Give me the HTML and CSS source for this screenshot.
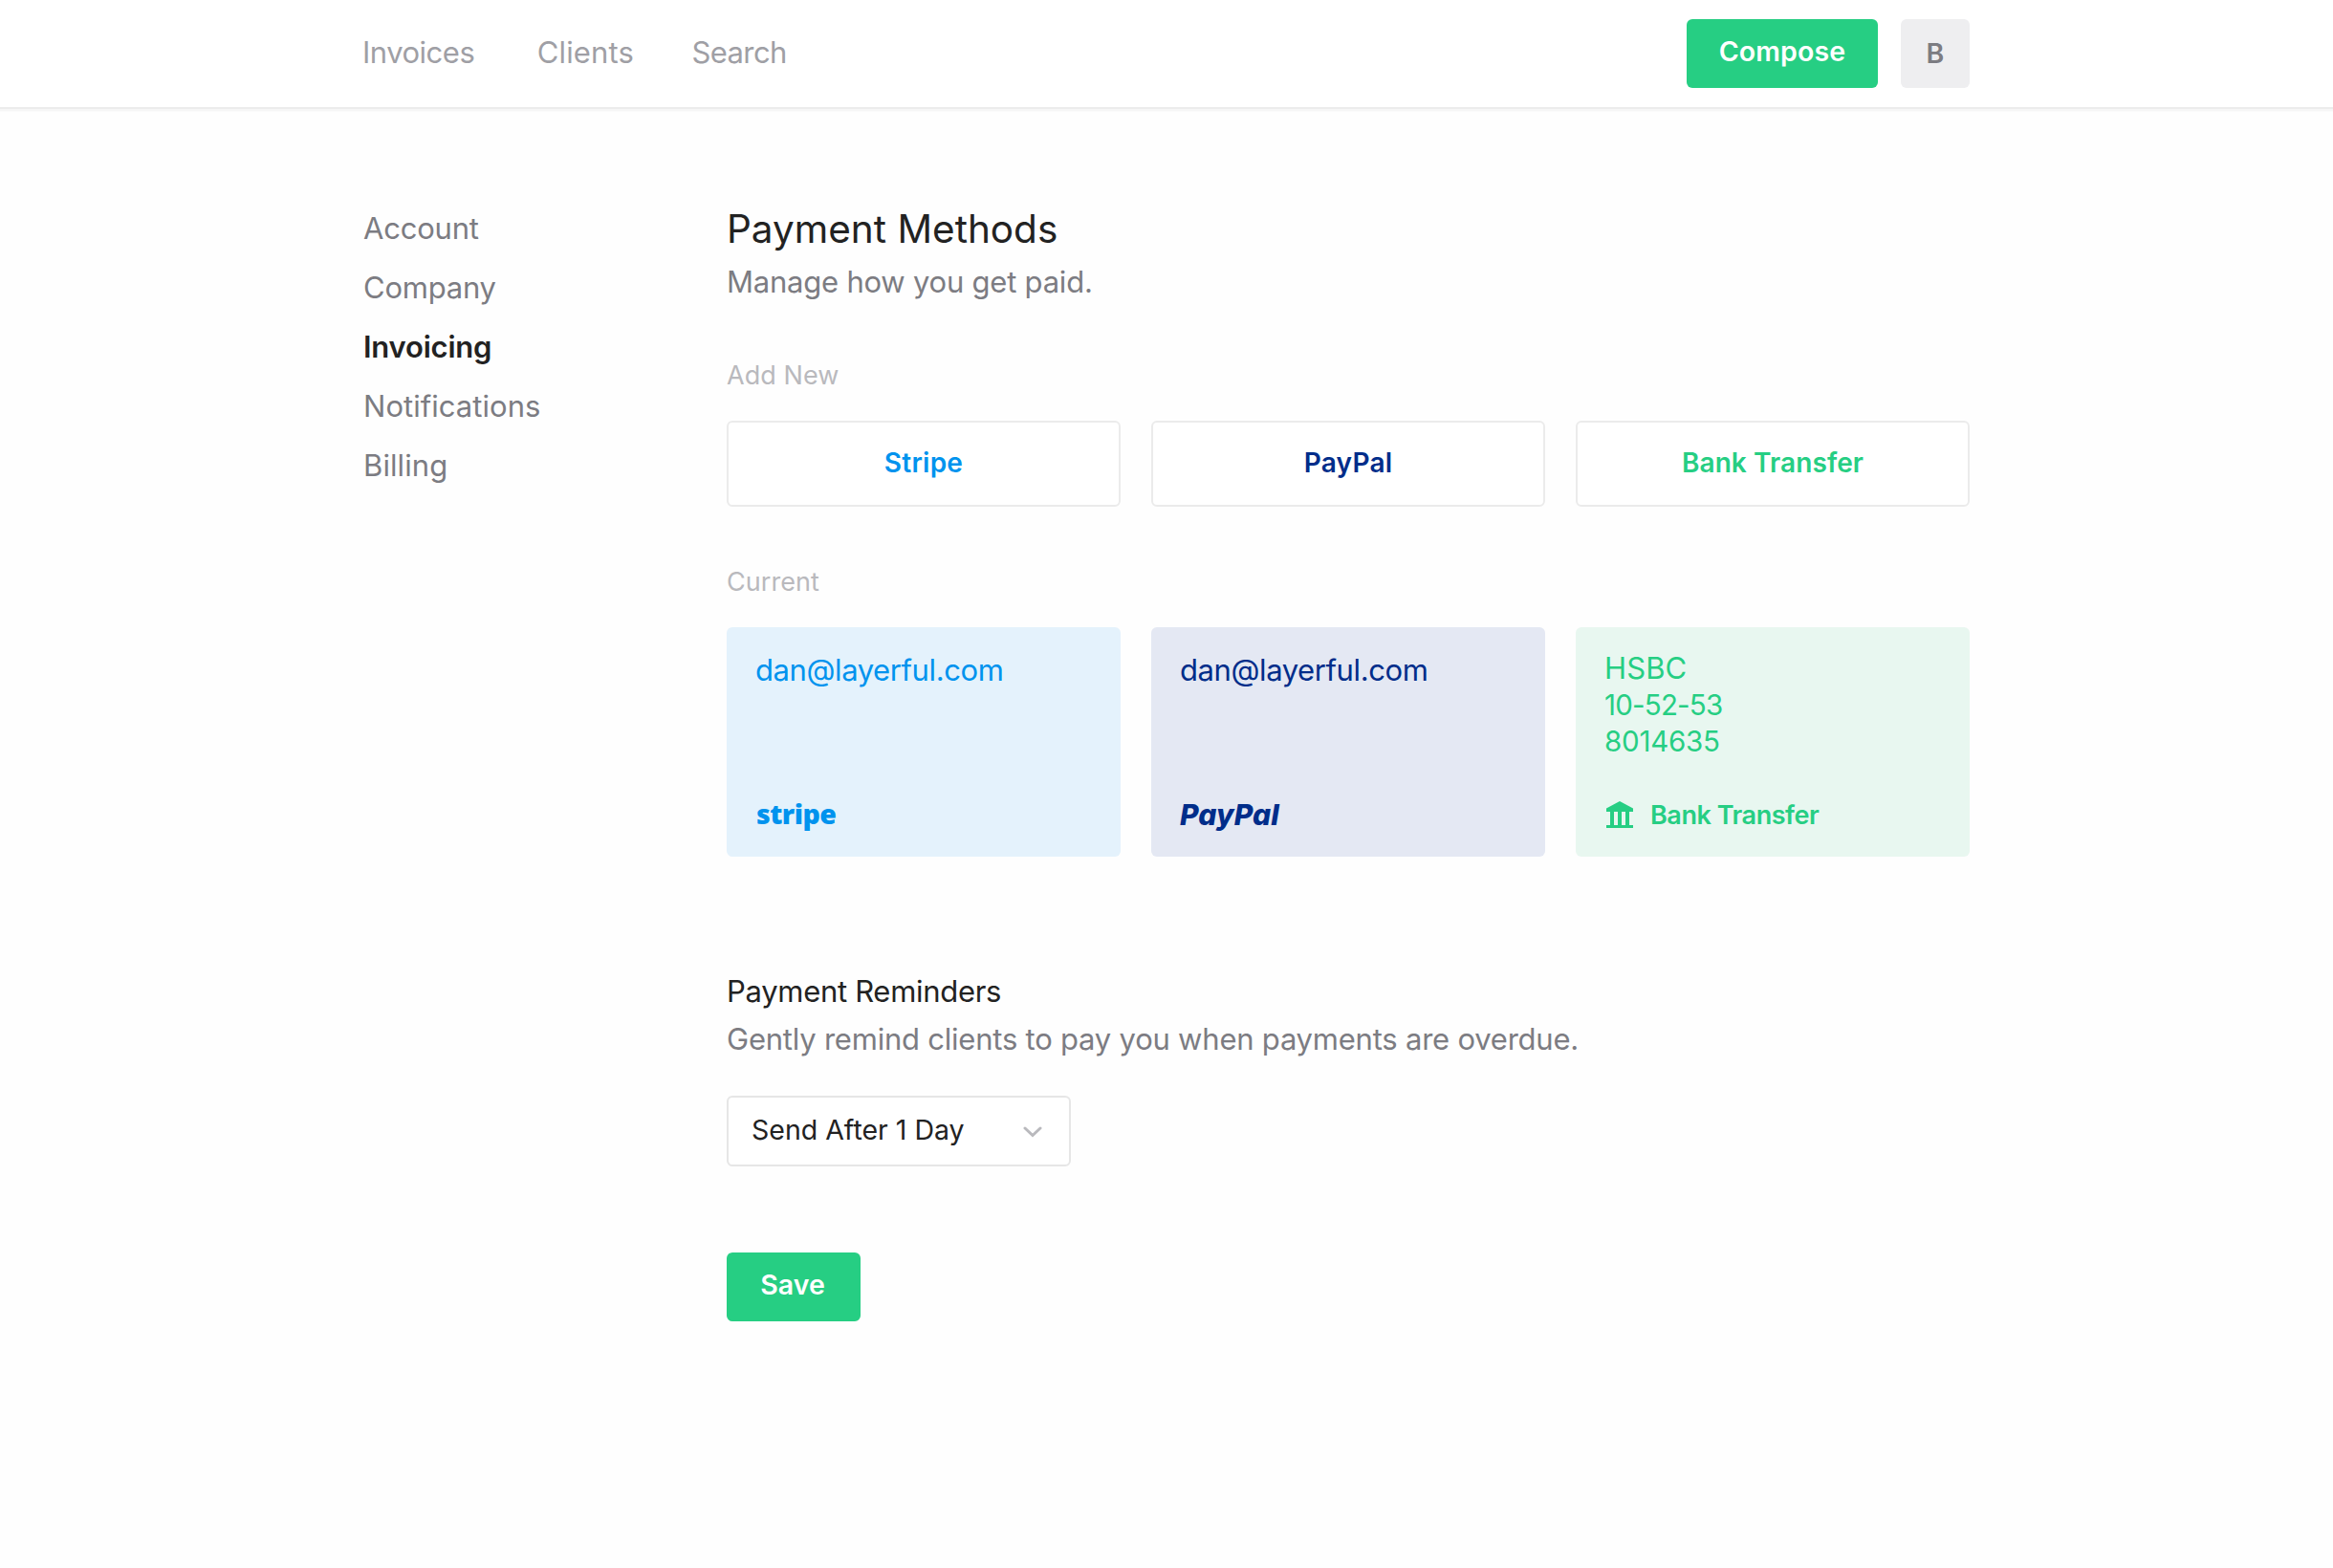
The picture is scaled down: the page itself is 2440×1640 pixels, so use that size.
FILE: index.html
```html
<!DOCTYPE html>
<html lang="en">
<head>
<meta charset="utf-8">
<title>Payment Methods</title>
<link rel="stylesheet" href="styles.css">
</head>
<body>
<header class="topbar">
  <div class="container topbar-inner">
    <nav class="nav">
      <a class="nav-link nav-invoices">Invoices</a>
      <a class="nav-link nav-clients">Clients</a>
      <a class="nav-link nav-search">Search</a>
    </nav>
    <div class="actions">
      <button class="btn btn-compose">Compose</button>
      <button class="avatar">B</button>
    </div>
  </div>
</header>

<div class="container page">
  <aside class="sidebar">
    <a class="side-link">Account</a>
    <a class="side-link">Company</a>
    <a class="side-link side-link-active">Invoicing</a>
    <a class="side-link side-notifications">Notifications</a>
    <a class="side-link side-billing">Billing</a>
  </aside>

  <main class="content">
    <h1 class="title">Payment Methods</h1>
    <p class="subtitle">Manage how you get paid.</p>

    <h3 class="label label-add">Add New</h3>
    <div class="grid">
      <button class="method method-stripe">Stripe</button>
      <button class="method method-paypal">PayPal</button>
      <button class="method method-bank">Bank Transfer</button>
    </div>

    <h3 class="label label-current">Current</h3>
    <div class="grid">
      <div class="card card-stripe">
        <div class="email">dan@layerful.com</div>
        <div class="brand brand-stripe">stripe</div>
      </div>
      <div class="card card-paypal">
        <div class="email">dan@layerful.com</div>
        <div class="brand brand-paypal">PayPal</div>
      </div>
      <div class="card card-bank">
        <div class="bank-details">
          <div class="bank-name">HSBC</div>
          <div class="sort-code">10-52-53</div>
          <div class="account-number">8014635</div>
        </div>
        <div class="brand brand-bank">
          <svg class="bank-icon" viewBox="0 0 28 28" fill="currentColor"><path d="M14 0 28 7.6V11H0V7.6ZM4 11h4v14H4ZM12 11h4v14h-4ZM20 11h4v14h-4ZM0 25h28v3H0Z"/></svg>
          <span>Bank Transfer</span>
        </div>
      </div>
    </div>

    <h2 class="section-title">Payment Reminders</h2>
    <p class="subtitle">Gently remind clients to pay you when payments are overdue.</p>
    <div class="select">
      <span>Send After 1 Day</span>
      <svg class="chevron" viewBox="0 0 20 12" fill="none" stroke="currentColor" stroke-width="3" stroke-linecap="round"><path d="M2 2l8 7.5L18 2"/></svg>
    </div>
    <button class="btn btn-save">Save</button>
  </main>
</div>
</body>
</html>
```
FILE: styles.css
```css
* { box-sizing: border-box; }

body {
  margin: 0;
  background: #fefefe;
  color: #222;
  font-family: Inter, "Liberation Sans", sans-serif;
  font-size: 31px;
  letter-spacing: -0.22px;
}

h1, h2, h3, p { margin: 0; font-weight: 400; }

button {
  border: 0;
  padding: 0;
  font: inherit;
  font-weight: 600;
}

.container { width: 1680px; margin: 0 auto; }

/* Top bar */
.topbar {
  height: 112px;
  background: #fff;
  box-shadow: 0 2px 0 #ececec, 0 4px 0 #f6f6f6, 0 5px 0 #fbfbfb;
}
.topbar-inner {
  height: 100%;
  display: flex;
  align-items: center;
  justify-content: space-between;
}
.nav { display: flex; margin-left: -1px; padding-bottom: 3px; color: #9f9fa5; }
.nav-invoices { letter-spacing: -0.5px; }
.nav-clients { margin-left: 65.5px; letter-spacing: 0.14px; }
.nav-search { margin-left: 60.5px; letter-spacing: -0.6px; }
.actions { display: flex; gap: 24px; }

.btn {
  display: flex;
  justify-content: center;
  align-items: center;
  height: 72px;
  padding-bottom: 5px;
  border-radius: 6px;
  background: #26ce83;
  color: #fff;
  font-size: 28.5px;
}
.btn-compose { width: 200px; letter-spacing: 0.12px; }
.btn-save { width: 140px; margin: 90px 0 0 -0.5px; padding-right: 1px; }
.avatar {
  width: 72px;
  height: 72px;
  padding-bottom: 2px;
  border-radius: 6px;
  background: #eeeef0;
  color: #7c7c82;
  font-size: 28.5px;
}

/* Page columns */
.page {
  display: grid;
  grid-template-columns: 380px 1300px;
  padding-top: 96px;
}
.sidebar { display: flex; flex-direction: column; color: #7c7c82; }
.side-link { line-height: 62px; }
.side-link-active { color: #222; font-weight: 600; }
.side-notifications { letter-spacing: 0.04px; }
.side-billing { letter-spacing: 0.1px; }

.title { padding-top: 1px; font-size: 40.5px; line-height: 61px; letter-spacing: 0; }
.subtitle { line-height: 50px; color: #7c7c82; }
.section-title { margin-top: 116px; font-size: 31px; line-height: 50px; letter-spacing: -0.3px; }
.label { padding-top: 1px; font-size: 27px; line-height: 40px; color: #b9b9bd; letter-spacing: 0.05px; }
.label-add { margin-top: 52px; }
.label-current { margin-top: 58px; }

.grid {
  display: grid;
  grid-template-columns: repeat(3, 412px);
  gap: 32px;
  margin-top: 27px;
}

/* Add new buttons */
.method {
  height: 90px;
  padding-bottom: 2px;
  border: 2px solid #ebebeb;
  border-radius: 6px;
  background: #fff;
  font-size: 28px;
  letter-spacing: 0.25px;
}
.method-stripe { color: #0093ee; }
.method-paypal { color: #002d8a; }
.method-bank { color: #26ce83; letter-spacing: 0.1px; }

/* Current method cards */
.card {
  display: flex;
  flex-direction: column;
  justify-content: space-between;
  height: 240px;
  padding: 20px 30px 22px;
  border-radius: 6px;
}
.card-stripe { background: #e4f2fc; color: #0093ee; }
.card-paypal { background: #e4e8f3; color: #002d8a; }
.card-bank { background: #e8f7f0; color: #26ce83; }
.email { line-height: 50px; letter-spacing: -0.4px; }
.bank-details { padding-top: 4px; line-height: 38px; }
.bank-name { letter-spacing: 0.1px; }
.sort-code { font-size: 29.5px; letter-spacing: -0.8px; }
.account-number { font-size: 29.5px; }
.brand { display: flex; align-items: center; height: 44px; }
.brand-stripe {
  padding: 0 0 2px 1px;
  font-family: "Open Sans", sans-serif;
  font-weight: 800;
  font-size: 28.5px;
  letter-spacing: -0.5px;
}
.brand-paypal {
  font-weight: 800;
  font-style: italic;
  font-size: 30px;
  letter-spacing: 0.1px;
}
.brand-bank { gap: 18px; font-weight: 600; font-size: 27px; letter-spacing: -0.45px; }
.bank-icon { width: 28px; height: 28px; margin-left: 2px; }

/* Reminder select */
.select {
  display: flex;
  align-items: center;
  justify-content: space-between;
  width: 360px;
  height: 74px;
  margin-top: 34px;
  padding: 0 28px 3px 24px;
  border: 2px solid #e6e6e6;
  border-radius: 6px;
  background: #fff;
  font-size: 28.5px;
  letter-spacing: 0;
}
.chevron { width: 20px; height: 12px; margin-top: 5px; color: #b9b9bd; }
```
